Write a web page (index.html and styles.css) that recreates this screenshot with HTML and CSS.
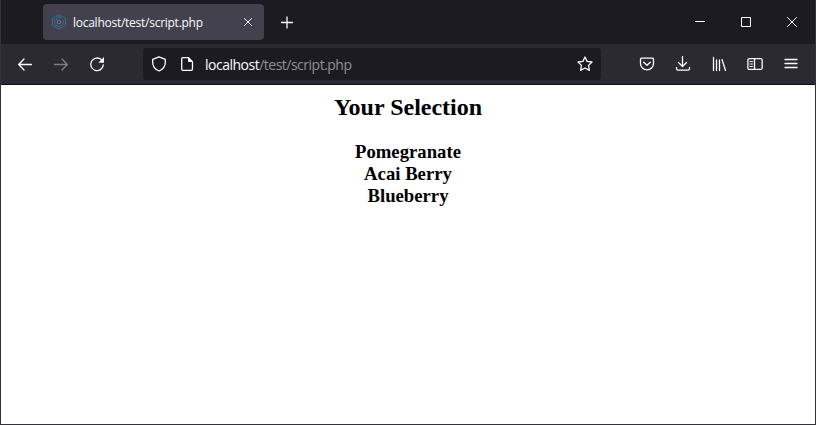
FILE: index.html
```
<!DOCTYPE html>
<html lang="en">
<head>
<meta charset="utf-8">
<title>localhost/test/script.php</title>
<link rel="stylesheet" href="styles.css">
</head>
<body>
<div class="window">
  <header class="titlebar">
    <div class="tab">
      <svg class="icon favicon" viewBox="0 0 16 16"><path d="M4 2.500 1.500 4v7.500L8 15l6.500-3.500V4L12 2.500"/><path d="M6 1v5M8 0v4M10 1.500v3M3.800 5v5.500L8 13l4.200-2.500V6"/><circle class="core" cx="8" cy="8" r="1.800"/></svg>
      <span class="tab-title">localhost/test/script.php</span>
      <svg class="icon tab-close" viewBox="0 0 16 16"><path d="m4.500 4.500 7 7m0-7-7 7"/></svg>
    </div>
    <svg class="icon new-tab" viewBox="0 0 16 16"><path d="M8 3v11M2.500 8.500h11"/></svg>
    <div class="controls">
      <svg class="icon crisp" viewBox="0 0 16 16"><path d="M3 7.500h10"/></svg>
      <svg class="icon crisp" viewBox="0 0 16 16"><path d="M3.500 3.500h9v9h-9z"/></svg>
      <svg class="icon thin" viewBox="0 0 16 16"><path d="m3.500 3.500 9 9m0-9-9 9"/></svg>
    </div>
  </header>
  <nav class="toolbar">
    <svg class="icon" viewBox="0 0 16 16"><path d="M14.500 8.500H2M7 3 1.700 8.500 7 14"/></svg>
    <svg class="icon disabled" viewBox="0 0 16 16"><path d="M1.500 8.500H14M9 3l5.300 5.500L9 14"/></svg>
    <svg class="icon" viewBox="0 0 16 16"><path d="M12.200 3.600A6.300 6.300 0 1 0 14.300 9"/><path class="solid" d="M15 1v5.700H9.300z"/></svg>
    <div class="urlbar">
      <svg class="icon" viewBox="0 0 16 16"><path d="M8 .9 14.300 3.400v2.800c0 3.800-2.500 7.200-6.300 8.800-3.800-1.600-6.300-5-6.300-8.800V3.400z"/></svg>
      <svg class="icon" viewBox="0 0 16 16"><path d="M4 1.700h5.500l4 4V13c0 .8-.5 1.300-1.300 1.300H4c-.8 0-1.300-.5-1.300-1.300V3c0-.8.5-1.300 1.300-1.300z"/><path class="solid" d="M9 1.500 13.800 6H10c-.6 0-1-.4-1-1z"/></svg>
      <span class="address"><span class="host">localhost</span>/test/script.php</span>
      <svg class="icon star" viewBox="0 0 16 16"><path d="m8 1 2.100 4.400 4.900.6-3.500 3.400.9 5L8 12l-4.400 2.400.9-5L1 6l4.900-.6z"/></svg>
    </div>
    <svg class="icon" viewBox="0 0 16 16"><path d="M2.500 2.200h11c.6 0 1 .4 1 1v4.300a6.500 6.300 0 0 1-13 0V3.200c0-.6.400-1 1-1z"/><path d="M4.700 6.200 8 9.300l3.300-3.100"/></svg>
    <svg class="icon" viewBox="0 0 16 16"><path d="M7.500.5v9.800M3.500 6.500l4 4 4-4M1.500 11.500v1c0 1 .7 1.700 1.700 1.700h9.600c1 0 1.700-.7 1.700-1.700v-1"/></svg>
    <svg class="icon" viewBox="0 0 16 16"><path d="M2.500 1.500v13M5.500 4v10.500M8.500 4v10.500M11 3.500l3.500 11"/></svg>
    <svg class="icon" viewBox="0 0 16 16"><rect x=".9" y="2.600" width="14.300" height="10.800" rx="1.500"/><path d="M7.500 2.600v10.800"/><path class="fine" d="M3 5.500h2.500M3 8h2.500M3 10.500h2.500"/></svg>
    <svg class="icon" viewBox="0 0 16 16"><path d="M2 3.500h12M2 7.500h12M2 11.500h12"/></svg>
  </nav>
  <main class="page">
    <h2>Your Selection</h2>
    <p class="choices">Pomegranate<br>Acai Berry<br>Blueberry</p>
  </main>
</div>
</body>
</html>
```
FILE: styles.css
```
* { box-sizing: border-box; }
body { margin: 0; background: #fff; }
.window {
  height: 425px;
  display: flex;
  flex-direction: column;
  border: solid #343438;
  border-width: 0 1px 1px;
}
.titlebar {
  height: 44px;
  padding: 4px 15px 4px 42px;
  display: flex;
  align-items: center;
  background: #1c1b22;
}
.icon {
  display: block;
  flex: none;
  width: 16px;
  height: 16px;
  fill: none;
  stroke: #fbfbfe;
  stroke-width: 1.3;
  stroke-linecap: round;
  stroke-linejoin: round;
}
.solid { fill: #fbfbfe; stroke: none; }
.tab {
  width: 221px;
  height: 36px;
  padding: 0 8px;
  display: flex;
  align-items: center;
  border-radius: 4px;
  background: #42414d;
  color: #fbfbfe;
  font: 12px/34px "Open Sans", "Noto Sans", sans-serif;
}
.favicon { stroke: #2f7196; stroke-width: 1; }
.core { stroke: #7d716c; }
.tab-title { margin-left: 6px; padding-top: 2px; letter-spacing: -0.26px; white-space: nowrap; }
.tab-close { margin-left: auto; stroke-width: 1; }
.new-tab { margin-left: 15px; }
.controls { margin-left: auto; display: flex; gap: 30px; }
.crisp { stroke-width: 1; stroke-linecap: butt; stroke-linejoin: miter; }
.thin { stroke-width: 1; }
.fine { stroke-width: 1; }
.toolbar {
  height: 41px;
  padding: 0 16px;
  display: flex;
  align-items: center;
  gap: 20px;
  background: #2b2a33;
  border-bottom: 1px solid #0c0c0d;
}
.disabled { opacity: .4; }
.urlbar {
  flex: 1;
  height: 32px;
  margin: 0 18px;
  padding: 0 8px;
  display: flex;
  align-items: center;
  gap: 12px;
  border-radius: 4px;
  background: #1c1b22;
}
.address {
  margin-left: -2px;
  padding-top: 2px;
  color: #8f8e96;
  font: 14px/30px "Open Sans", "Noto Sans", sans-serif;
  letter-spacing: -0.5px;
  white-space: nowrap;
}
.host { color: #fbfbfe; }
.star { margin-left: auto; }
.page {
  flex: 1;
  padding-top: 8px;
  color: #000;
  background: #fff;
  font-family: "Liberation Serif", serif;
  font-weight: bold;
  text-align: center;
}
h2 { margin: 0; font-size: 24px; line-height: 28px; }
.choices { margin: 20px 0 0; font-size: 18.72px; line-height: 22px; }
```
